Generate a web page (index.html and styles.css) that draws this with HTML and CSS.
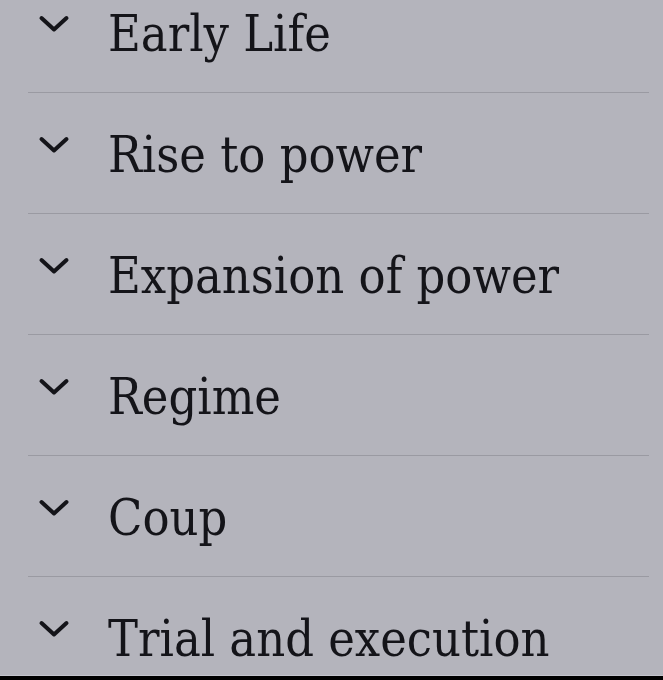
FILE: index.html
```html
<!DOCTYPE html>
<html lang="en">
<head>
  <meta charset="UTF-8">
  <meta name="viewport" content="width=device-width, initial-scale=1.0">
  <title>Contents</title>
  <link rel="stylesheet" href="styles.css">
</head>
<body>
  <div class="screen">
    <!-- Lista de secções -->
    <ul class="toc">
      <li class="toc-item">
        <svg class="chevron" viewBox="0 0 32 18"><path d="M3.5 3 L16 14.5 L28.5 3"/></svg>
        <span class="toc-title">Early Life</span>
      </li>
      <li class="toc-item">
        <svg class="chevron" viewBox="0 0 32 18"><path d="M3.5 3 L16 14.5 L28.5 3"/></svg>
        <span class="toc-title">Rise to power</span>
      </li>
      <li class="toc-item">
        <svg class="chevron" viewBox="0 0 32 18"><path d="M3.5 3 L16 14.5 L28.5 3"/></svg>
        <span class="toc-title">Expansion of power</span>
      </li>
      <li class="toc-item">
        <svg class="chevron" viewBox="0 0 32 18"><path d="M3.5 3 L16 14.5 L28.5 3"/></svg>
        <span class="toc-title">Regime</span>
      </li>
      <li class="toc-item">
        <svg class="chevron" viewBox="0 0 32 18"><path d="M3.5 3 L16 14.5 L28.5 3"/></svg>
        <span class="toc-title">Coup</span>
      </li>
      <li class="toc-item">
        <svg class="chevron" viewBox="0 0 32 18"><path d="M3.5 3 L16 14.5 L28.5 3"/></svg>
        <span class="toc-title">Trial and execution</span>
      </li>
    </ul>
    <!-- Barra inferior -->
    <div class="bottom-bar"></div>
  </div>
</body>
</html>
```

FILE: styles.css
```css
/* Cores */
:root {
  --bg-color: #b4b4bc;
  --text-color: #141419;
  --line-color: #9a9aa2;
}

body {
  margin: 0;
  background-color: var(--bg-color);
  color: var(--text-color);
  font-family: "DejaVu Serif Condensed", "DejaVu Serif", Georgia, serif;
  font-stretch: semi-condensed;
}

.screen {
  display: flex;
  flex-direction: column;
  height: 680px;
  overflow: hidden;
}

.toc {
  flex: 1;
  overflow: hidden;
  list-style: none;
  margin: -28px 0 0 28px;
  padding: 0;
  width: 621px;
}

.toc-item {
  display: flex;
  align-items: center;
  height: 120px;
  border-bottom: 1px solid var(--line-color);
}

.chevron {
  flex-shrink: 0;
  width: 32px;
  height: 18px;
  margin: 0 38px 0 10px;
  position: relative;
  top: -8px;
  fill: none;
  stroke: var(--text-color);
  stroke-width: 4;
  stroke-linecap: round;
  stroke-linejoin: round;
}

.toc-title {
  margin-top: 4px;
  font-size: 50px;
  line-height: 1;
}

.bottom-bar {
  height: 4px;
  background-color: #000;
  border-top: 1px solid #c4c4cc;
}
```
